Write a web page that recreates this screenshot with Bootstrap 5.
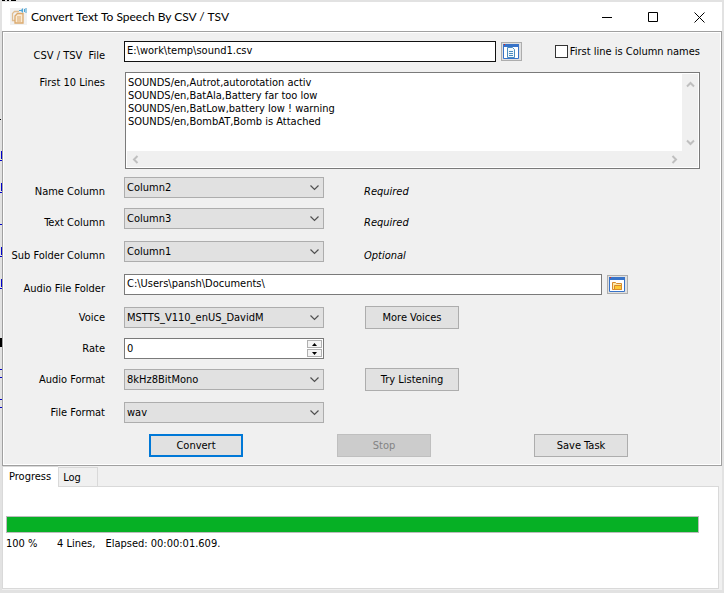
<!DOCTYPE html>
<html lang="en">
<head>
<meta charset="utf-8">
<meta name="viewport" content="width=device-width, initial-scale=1">
<title>Convert Text To Speech By CSV / TSV</title>
<link rel="stylesheet" href="https://cdn.jsdelivr.net/npm/bootstrap@5.3.0/dist/css/bootstrap.min.css">
<style>
:root{--face:#f0f0f0;--edge:#adadad;--line:#d9d9d9;--dark:#7a7a7a;--ink:linear-gradient(#00c,#00c);--black:linear-gradient(#000,#000)}
body{font-family:"DejaVu Sans Condensed","DejaVu Sans",sans-serif;font-size:11px;line-height:13px;color:#000;padding:2px 2px 3px;
background:var(--black) 2px 0/3px 1px no-repeat,var(--black) 7px 0/2px 1px no-repeat,var(--black) 11px 0/5px 1px no-repeat,var(--black) 0 119px/1px 1px no-repeat,var(--ink) 0 160px/2px 1px no-repeat,var(--ink) 1px 151px/1px 8px no-repeat,var(--ink) 0 192px/2px 1px no-repeat,var(--ink) 1px 183px/1px 8px no-repeat,var(--ink) 0 224px/2px 1px no-repeat,var(--ink) 0 256px/2px 1px no-repeat,var(--ink) 1px 247px/1px 8px no-repeat,var(--ink) 0 288px/2px 1px no-repeat,var(--ink) 1px 279px/1px 8px no-repeat,var(--black) 0 338px/2px 9px no-repeat,var(--ink) 0 369px/2px 1px no-repeat,var(--ink) 0 377px/2px 1px no-repeat,var(--ink) 0 399px/2px 1px no-repeat,var(--ink) 0 407px/2px 1px no-repeat,#e2e2e2}
.app-window{min-height:calc(100vh - 5px);background:var(--face)}
.title-strip{height:29px;background:#fff;font-family:Lato,"Noto Sans",sans-serif;font-size:12px}
.cap-btn{width:46px;height:29px;border:0;background:none;padding:0}
.panel-box{border:1px solid #a0a0a0;box-shadow:inset -1px -1px #fff,inset 1px 1px #fff;padding:9px 21px 9px 1px}
.line-s{margin-top:8px}.line-m{margin-top:10px}.line-l{margin-top:12px}
.line{display:flex;min-height:21px;align-items:center}
.cap{width:101px;margin-right:19px;text-align:right;flex:none}
.cap-low{align-self:flex-start;padding-top:8px}
.field{height:21px;border:1px solid var(--dark);border-radius:0;background:#fff;padding:0 2px 2px;font-size:11px;line-height:13px;color:#000;min-width:0}
.field-focus{border-color:#111}
.combo{width:200px;height:21px;border:1px solid var(--edge);border-radius:0;padding:0 18px 0 2px;font-size:11px;line-height:13px;color:#000;background:#e1e1e1 url("data:image/svg+xml,%3Csvg xmlns='http://www.w3.org/2000/svg' width='9' height='6'%3E%3Cpath d='M.5.5l4 4 4-4' fill='none' stroke='%23505050' stroke-width='1.2'/%3E%3C/svg%3E") no-repeat right 4px center;flex:none}
.push{width:94px;height:23px;margin-top:-1px;margin-bottom:-1px;padding:0;border:1px solid var(--edge);border-radius:0;background:#e1e1e1;font-size:11px;line-height:13px;color:#000;flex:none}
.push-main{border:2px solid #0078d7}
.push:disabled{background:#ccc;border-color:#bfbfbf;color:#838383;opacity:1}
.push-after{margin-left:41px}
.pick{width:21px;height:19px;padding:0;border:1px solid var(--edge);background:#e1e1e1;margin-left:5px;flex:none;display:flex}
.hint{margin-left:40px;font-style:italic;align-self:flex-start;padding-top:8px}
.tick.form-check-input{width:13px;height:13px;margin:0 2px 0 33px;border:1px solid #333;border-radius:0;background-color:#fff;flex:none}
.preview{display:grid;grid-template-columns:1fr 16px;grid-template-rows:auto 16px;border:1px solid var(--dark);background:#fff;padding:1px;margin-left:1px}
.preview textarea{border:0;border-radius:0;padding:2px 1px;height:77px;resize:none;overflow:hidden;font-size:11px;line-height:13px;color:#000;white-space:pre}
.bar-y,.bar-x{background:var(--face)}
.bar-x{grid-column:1/3;padding:0 20px 0 5px}
.bar-y{padding:7px 0 5px}
.spin{width:200px;height:21px;border:1px solid var(--dark);background:#fff;padding:1px}
.spin input{border:0;border-radius:0;padding:0 1px;font-size:11px;line-height:13px;color:#000;min-height:0;min-width:0}
.spin-btn{width:15px;height:8px;border:1px solid #b0b0b0;background:#f4f4f4;padding:0;display:flex;align-items:center;justify-content:center}
.actions{padding-left:145px;padding-right:72px}
.stop-gap{margin-left:94px}
.tab-strip{--bs-nav-tabs-border-width:0;align-items:flex-end;margin:0 3px 0 0;border-bottom:1px solid var(--line)}
.tab-strip .nav-link{border:1px solid var(--line);border-radius:0;border-bottom:0;margin:0;padding:1px 16px 0 4px;height:19px;font-size:11px;line-height:13px;color:#000;background:var(--face)}
.tab-strip .nav-link.active{border:1px solid var(--line);border-bottom:0;border-right:0;height:21px;padding:0 7px 2px 6px;background:#fff;color:#000;margin-bottom:-1px}
.tab-body{flex:1;background:#fff;border:1px solid var(--line);border-top:0;margin:0 3px 1px 0;padding:29px 19px 0 3px}
.meter{height:17px;border:1px solid #bcbcbc;border-radius:0;background:#e6e6e6}
.meter .progress-bar{background:#06b025}
.status{gap:10px;padding:4px 0 0}
.pct{width:41px}
</style>
<script src="https://cdn.jsdelivr.net/npm/bootstrap@5.3.0/dist/js/bootstrap.bundle.min.js"></script>
</head>
<body>
<main class="app-window d-flex flex-column">
  <header class="title-strip d-flex align-items-center">
    <svg class="ms-2 me-1" width="17" height="17" viewBox="0 0 17 17" fill="none" aria-hidden="true"><path fill="#f1f1f1" d="M0 0h17v17H0z"/><path d="M5 12.500H2.500v-7l2-2H9" stroke="#dfbd91" stroke-width="1.300"/><path d="M5 8l2.500-2.500H13v9.500H5z" fill="#faead4" stroke="#dba96c" stroke-width="1.300"/><path d="M7 9h4M7 11h4M7 13h4" stroke="#dba96c"/><path d="M9 2h2l2-2v5l-2-2H9z" fill="#4da6d8"/><path d="M14.500 1v3M16 0v5" stroke="#4da6d8"/></svg>
    <span>Convert Text To Speech By CSV / TSV</span>
    <div class="ms-auto d-flex">
      <button class="cap-btn" type="button" aria-label="Minimize"><svg width="11" height="11" stroke="#000"><path d="M0 5.500h10"/></svg></button>
      <button class="cap-btn" type="button" aria-label="Maximize"><svg width="11" height="11" stroke="#000" fill="none"><path d="M.5.5h9v9h-9z"/></svg></button>
      <button class="cap-btn" type="button" aria-label="Close"><svg width="11" height="11" stroke="#000"><path d="M.5.5l10 10M10.500.5l-10 10"/></svg></button>
    </div>
  </header>

  <form class="panel-box">
    <div class="line">
      <label class="cap cap-low" for="csv">CSV / TSV&nbsp; File</label>
      <input class="field field-focus flex-grow-1" id="csv" type="text" value="E:\work\temp\sound1.csv">
      <button class="pick" type="button" aria-label="Choose file"><svg width="19" height="17" viewBox="0 0 19 17" fill="none"><path d="M1.500 1.500h15v14h-15z" fill="#fff" stroke="#3873c8"/><path d="M1 1h16v3H1z" fill="#3873c8"/><path d="M2 1h1v1H2z" fill="#e02020"/><path d="M5.500 4.500h5l2 2v8h-7z" fill="#f2f8fc" stroke="#4a8cc0"/><path d="M7 8.500h4M7 10.500h4M7 12.500h4" stroke="#4a8cc0"/></svg></button>
      <input class="form-check-input tick" id="names" type="checkbox"><label for="names">First line is Column names</label>
    </div>
    <div class="line line-m">
      <label class="cap align-self-start pt-1" for="lines">First 10 Lines</label>
      <div class="preview flex-grow-1">
        <textarea id="lines" wrap="off" spellcheck="false">SOUNDS/en,Autrot,autorotation activ
SOUNDS/en,BatAla,Battery far too low
SOUNDS/en,BatLow,battery low ! warning
SOUNDS/en,BombAT,Bomb is Attached</textarea>
        <div class="bar-y d-flex flex-column align-items-center justify-content-between"><svg width="9" height="7" fill="none" stroke="#bfbfbf" stroke-width="2"><path d="M1 5.500l3.500-3.500L8 5.500"/></svg><svg width="9" height="7" fill="none" stroke="#bfbfbf" stroke-width="2"><path d="M1 1.500L4.500 5 8 1.500"/></svg></div>
        <div class="bar-x d-flex align-items-center justify-content-between"><svg width="7" height="9" fill="none" stroke="#bfbfbf" stroke-width="2"><path d="M5.500 1L2 4.500 5.500 8"/></svg><svg width="7" height="9" fill="none" stroke="#bfbfbf" stroke-width="2"><path d="M1.500 1L5 4.500 1.500 8"/></svg></div>
      </div>
    </div>
    <div class="line line-s">
      <label class="cap cap-low" for="namecol">Name Column</label>
      <select class="form-select combo" id="namecol"><option>Column2</option></select>
      <span class="hint">Required</span>
    </div>
    <div class="line line-m">
      <label class="cap cap-low" for="textcol">Text Column</label>
      <select class="form-select combo" id="textcol"><option>Column3</option></select>
      <span class="hint">Required</span>
    </div>
    <div class="line line-l">
      <label class="cap cap-low" for="subcol">Sub Folder Column</label>
      <select class="form-select combo" id="subcol"><option>Column1</option></select>
      <span class="hint">Optional</span>
    </div>
    <div class="line line-l pe-5">
      <label class="cap cap-low" for="folder">Audio File Folder</label>
      <input class="field flex-grow-1" id="folder" type="text" value="C:\Users\pansh\Documents\">
      <button class="pick me-4" type="button" aria-label="Choose folder"><svg width="19" height="17" viewBox="0 0 19 17" fill="none"><path d="M1.500 1.500h15v14h-15z" fill="#fff" stroke="#3873c8"/><path d="M1 1h16v3H1z" fill="#3873c8"/><path d="M2 1h1v1H2z" fill="#e02020"/><path d="M4.500 13.500v-7h3l1 1h5v6z" fill="#ffe9a8" stroke="#d98a2b"/><path d="M6.500 13.500v-4h7v4z" fill="#ffc933" stroke="#d98a2b"/></svg></button>
    </div>
    <div class="line line-l">
      <label class="cap" for="voice">Voice</label>
      <select class="form-select combo" id="voice"><option>MSTTS_V110_enUS_DavidM</option></select>
      <button class="push push-after" type="button">More Voices</button>
    </div>
    <div class="line line-m">
      <label class="cap" for="rate">Rate</label>
      <div class="spin d-flex">
        <input class="flex-grow-1" id="rate" type="text" value="0">
        <div class="d-flex flex-column justify-content-between">
          <button class="spin-btn" type="button" aria-label="Increase"><svg width="5" height="3"><path d="M0 3L2.500 0 5 3z"/></svg></button>
          <button class="spin-btn" type="button" aria-label="Decrease"><svg width="5" height="3"><path d="M0 0h5L2.500 3z"/></svg></button>
        </div>
      </div>
    </div>
    <div class="line line-m">
      <label class="cap" for="aformat">Audio Format</label>
      <select class="form-select combo" id="aformat"><option>8kHz8BitMono</option></select>
      <button class="push push-after" type="button">Try Listening</button>
    </div>
    <div class="line line-l">
      <label class="cap" for="fformat">File Format</label>
      <select class="form-select combo" id="fformat"><option>wav</option></select>
    </div>
    <div class="line line-l actions">
      <button class="push push-main" type="submit">Convert</button>
      <button class="push stop-gap" type="button" disabled>Stop</button>
      <button class="push ms-auto" type="button">Save Task</button>
    </div>
  </form>

  <div class="nav nav-tabs tab-strip" role="tablist">
    <button class="nav-link active" type="button" role="tab" aria-selected="true">Progress</button>
    <button class="nav-link" type="button" role="tab" aria-selected="false">Log</button>
  </div>
  <section class="tab-body">
    <div class="progress meter" role="progressbar" aria-label="Conversion" aria-valuenow="100" aria-valuemin="0" aria-valuemax="100"><div class="progress-bar" style="width:100%"></div></div>
    <div class="status d-flex"><span class="pct">100 %</span><span>4 Lines,</span><span>Elapsed: 00:00:01.609.</span></div>
  </section>
</main>
</body>
</html>
